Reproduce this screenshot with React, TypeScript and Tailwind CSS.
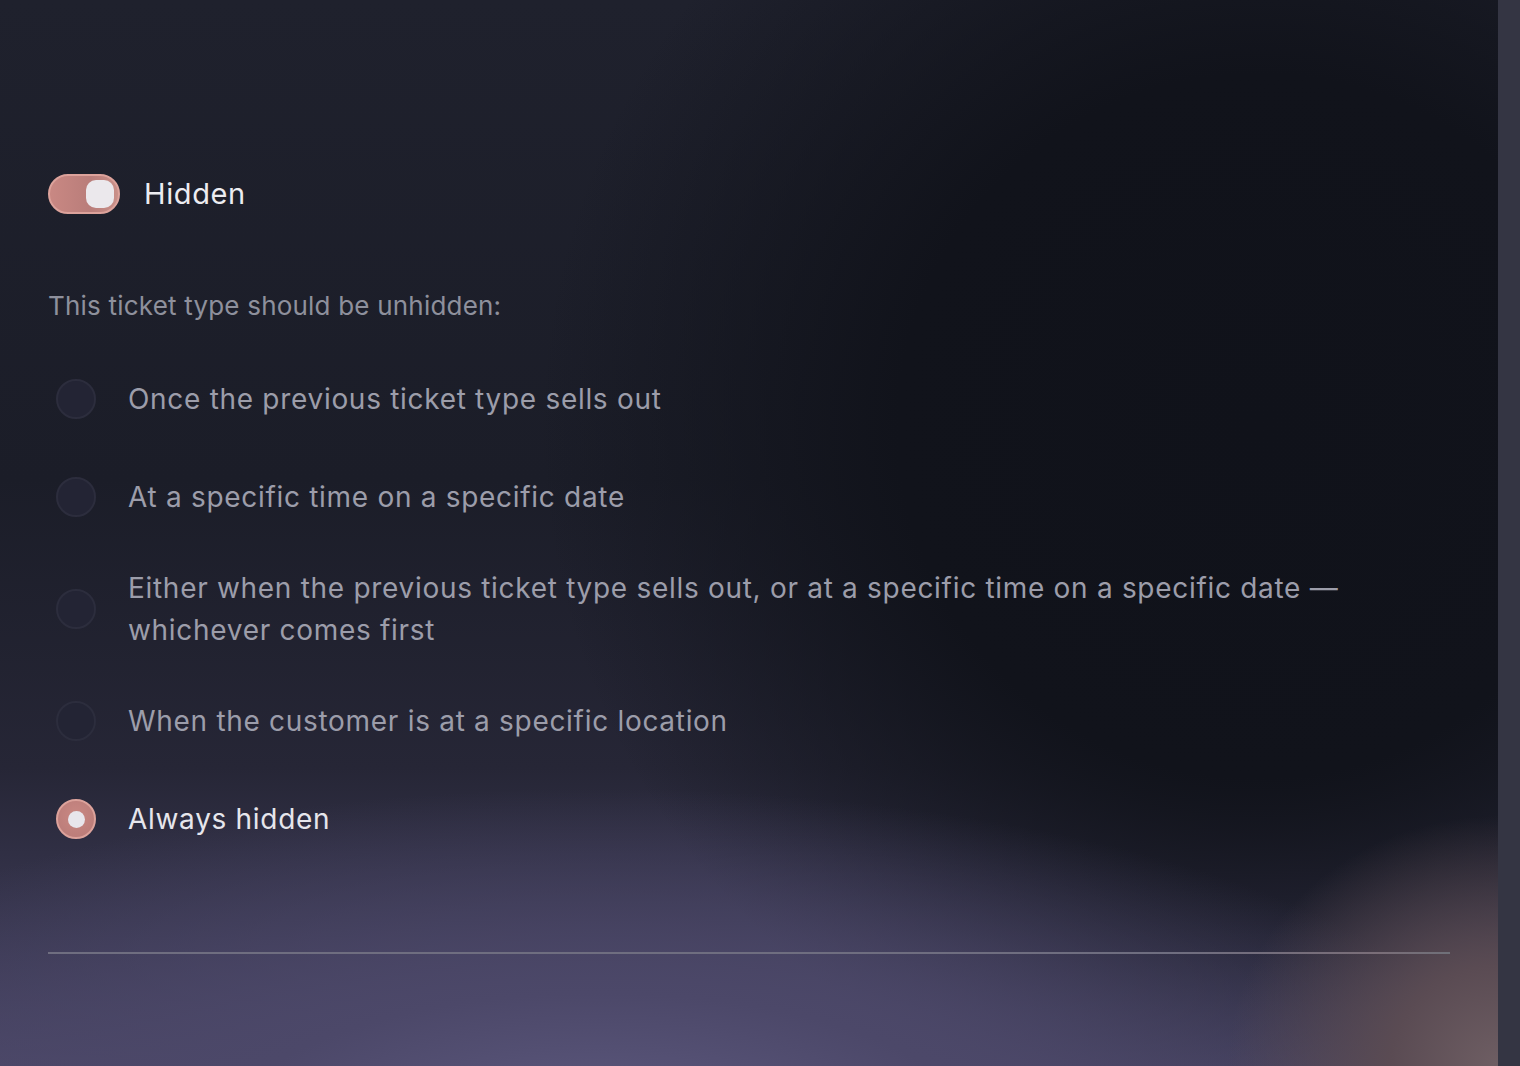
import { useState } from "react"

const options = [
  "Once the previous ticket type sells out",
  "At a specific time on a specific date",
  "Either when the previous ticket type sells out, or at a specific time on a specific date — whichever comes first",
  "When the customer is at a specific location",
  "Always hidden",
]

export default function App() {
  const [hidden, setHidden] = useState(true)
  const [selected, setSelected] = useState(4)

  return (
    <div className="flex h-[1066px] w-full overflow-hidden font-['Inter',sans-serif]">
      {/* Main panel */}
      <div className="relative flex-1 bg-[radial-gradient(ellipse_270px_250px_at_100%_100%,#6e5e63_0%,#5a4b53_40%,rgba(40,36,46,0)_100%),radial-gradient(ellipse_62%_32%_at_40%_106%,#5e5a80_0%,#4c4869_40%,rgba(44,42,62,0)_100%),radial-gradient(ellipse_48%_66%_at_84%_40%,#10121a_0%,#11131b_50%,rgba(17,19,27,0)_100%),linear-gradient(180deg,#1f212d_0%,#1b1d28_45%,#262636_72%,#3a3852_88%,#4a4666_100%)]">
        <div className="flex flex-col px-12 pt-[174px]">
          {/* Toggle row */}
          <div className="flex h-10 items-center gap-6">
            <button
              type="button"
              onClick={() => setHidden(!hidden)}
              className={`flex h-10 w-[72px] items-center rounded-full border-2 px-[4px] ${
                hidden
                  ? "justify-end border-[#dca29b] bg-[linear-gradient(90deg,#c98883_0%,#b97d7a_60%,#c99089_100%)]"
                  : "justify-start border-[#3a3b4b] bg-[#262736]"
              }`}
            >
              <span className="h-7 w-7 rounded-[10px] bg-[#ebe8ec]" />
            </button>
            <span className="text-[29px] leading-10 tracking-[0.6px] text-[#ececf1]">Hidden</span>
          </div>

          <p className="mt-[72px] text-[26px] leading-10 tracking-[0.2px] text-[#8e909c]">
            This ticket type should be unhidden:
          </p>

          {/* Options */}
          <div className="mt-[45px] flex flex-col gap-[42px]">
            {options.map((label, i) => {
              const active = selected === i
              return (
                <div key={i} onClick={() => setSelected(i)} className="flex cursor-pointer items-center gap-6">
                  <div className="flex h-14 w-14 shrink-0 items-center justify-center">
                    {active ? (
                      <div className="flex h-10 w-10 items-center justify-center rounded-full border-2 border-[#dca29b] bg-[radial-gradient(circle_at_50%_40%,#c98883_0%,#b87a77_100%)]">
                        <div className="h-[17px] w-[17px] rounded-full bg-[#e8e6ec]" />
                      </div>
                    ) : (
                      <div className="h-10 w-10 rounded-full border-2 border-[#2c2d3d] bg-[#232434]" />
                    )}
                  </div>
                  <span
                    className={`text-[28px] leading-[42px] tracking-[0.7px] ${
                      active ? "text-[#e6e6ec]" : "text-[#9c9daa]"
                    }`}
                  >
                    {label}
                  </span>
                </div>
              )
            })}
          </div>

          <div className="mt-[105px] h-[2px] bg-[linear-gradient(90deg,#6f6e80_0%,#6f6e80_80%,#7a6e78_95%,#6f7079_100%)]" />
        </div>
      </div>

      {/* Right strip */}
      <div className="w-[22px] shrink-0 bg-[#343543]" />
    </div>
  )
}
